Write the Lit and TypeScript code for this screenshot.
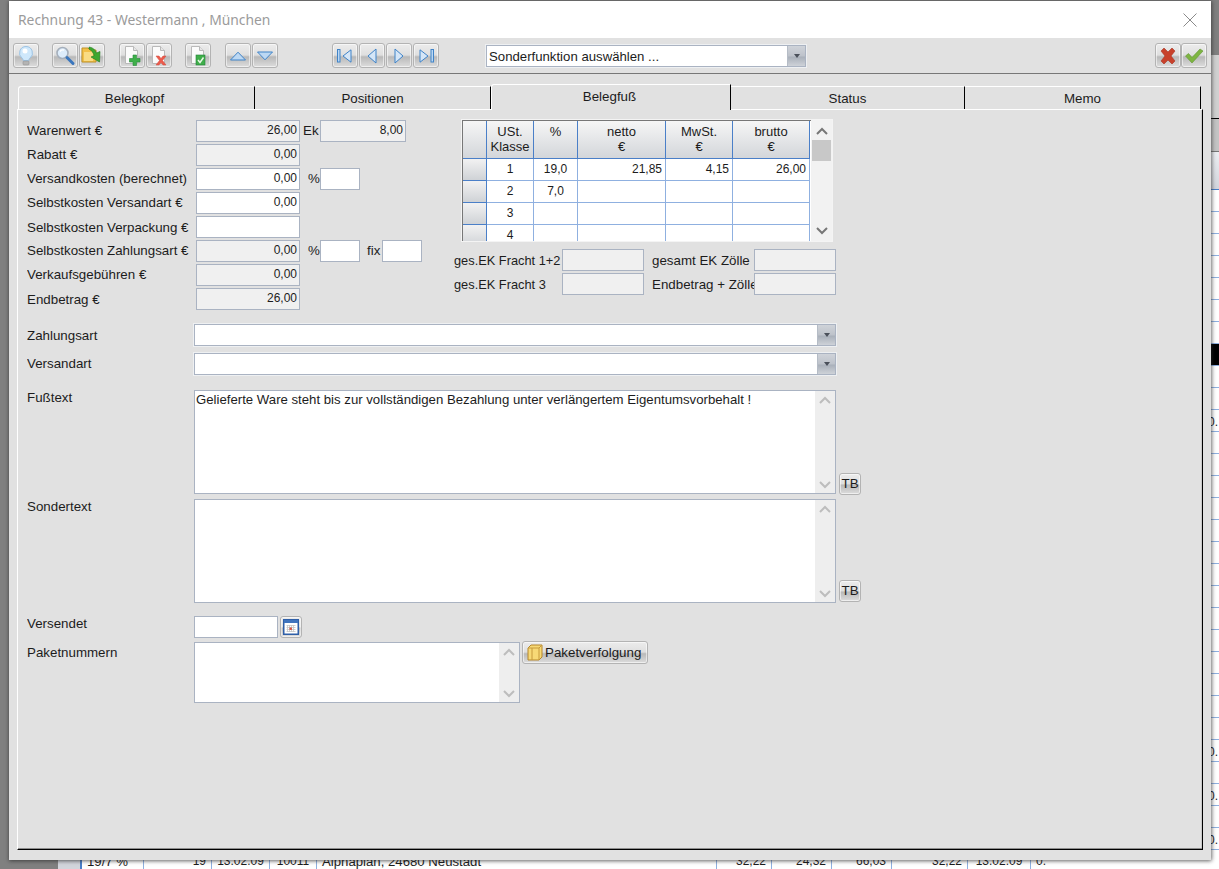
import { LitElement, html, svg, css } from "lit";
import { customElement } from "lit/decorators.js";

const chevUp = html`<svg class="chev" width="14" height="9" viewBox="0 0 14 9"><polyline points="2,7 7,2 12,7" fill="none" stroke="currentColor" stroke-width="2"/></svg>`;
const chevDown = html`<svg class="chev" width="14" height="9" viewBox="0 0 14 9"><polyline points="2,2 7,7 12,2" fill="none" stroke="currentColor" stroke-width="2"/></svg>`;
const doc = svg`<path d="M3.5 1.5h8l4 4v13h-12z" fill="#fbfbfb" stroke="#b9b9b9"/><path d="M11.5 1.5v4h4" fill="#e6e6e6" stroke="#b9b9b9"/>`;

const icons: Record<string, unknown> = {
  bulb: html`<svg width="20" height="22" viewBox="0 0 20 22"><path d="M10 1.5a6.5 6.5 0 0 1 4 11.6c-.9.8-1.2 1.6-1.2 2.4H7.2c0-.8-.3-1.6-1.2-2.4A6.5 6.5 0 0 1 10 1.5z" fill="#cfe8fb" stroke="#9cc3e4"/><circle cx="9" cy="6" r="2.5" fill="#fff"/><rect x="7" y="16" width="6" height="4" rx="1" fill="#b4b4b4" stroke="#949494" stroke-width=".6"/></svg>`,
  search: html`<svg width="22" height="22" viewBox="0 0 22 22"><circle cx="8.5" cy="8" r="5.5" fill="#dcecfb" stroke="#a5afbb" stroke-width="1.6"/><path d="M6 6.5a3.5 3.5 0 0 1 4-1.4" fill="none" stroke="#fff" stroke-width="1.4"/><path d="M13 12.5l6 6" stroke="#3a76bd" stroke-width="3" stroke-linecap="round"/></svg>`,
  folder: html`<svg width="22" height="22" viewBox="0 0 22 22"><path d="M1 3h6l2 2h6v12H1z" fill="#f2c04a" stroke="#c09428"/><path d="M3 7h9v9H3z" fill="#f9dc85"/><path d="M8 2c4 .5 6 2.500 7.500 6L19 6.500 18.500 17 10 12l3.200-1.500C12 7.500 10.500 5 8 4z" fill="#3da72f" stroke="#1f7a1c" stroke-width=".6"/></svg>`,
  add: html`<svg width="20" height="21" viewBox="0 0 20 21">${doc}<path d="M11 10h3.500v3.500H18v3.500h-3.500v3.500H11V17H7.500v-3.500H11z" fill="#3fb04a" stroke="#27893a" stroke-width=".6"/></svg>`,
  del: html`<svg width="20" height="21" viewBox="0 0 20 21">${doc}<path d="M7 11h3l2 2.500 2-2.500h3l-3.500 4.500 3.500 4.500h-3l-2-2.500-2 2.500H7l3.500-4.500z" fill="#ec5b4c" stroke="#d04a3c" stroke-width=".5"/></svg>`,
  renew: html`<svg width="20" height="21" viewBox="0 0 20 21">${doc}<rect x="8" y="10" width="9" height="10" fill="#3fae4a" stroke="#23813a" stroke-width=".6"/><path d="M10 15l2 2.500 3.500-5" fill="none" stroke="#e9f7e6" stroke-width="1.5"/></svg>`,
  up: html`<svg width="18" height="10" viewBox="0 0 18 10"><path d="M9 1.200L16.500 9h-15z" fill="#bcd8f3" stroke="#3f83c8"/></svg>`,
  down: html`<svg width="18" height="10" viewBox="0 0 18 10"><path d="M9 8.800L16.500 1h-15z" fill="#bcd8f3" stroke="#3f83c8"/></svg>`,
  first: html`<svg width="18" height="14" viewBox="0 0 18 14"><rect x="1.500" y=".5" width="2.500" height="12.500" fill="#bcd8f3" stroke="#3f83c8"/><path d="M7 7l8-6.200v12.400z" fill="#d5e6f7" stroke="#3f83c8"/></svg>`,
  prev: html`<svg width="12" height="16" viewBox="0 0 12 16"><path d="M2 8l8-7v14z" fill="#d5e6f7" stroke="#3f83c8"/></svg>`,
  next: html`<svg width="12" height="16" viewBox="0 0 12 16"><path d="M10 8L2 1v14z" fill="#d5e6f7" stroke="#3f83c8"/></svg>`,
  last: html`<svg width="18" height="14" viewBox="0 0 18 14"><rect x="14" y=".5" width="2.500" height="12.500" fill="#bcd8f3" stroke="#3f83c8"/><path d="M11 7L3 .8v12.400z" fill="#d5e6f7" stroke="#3f83c8"/></svg>`,
  cancel: html`<svg width="18" height="18" viewBox="0 0 18 18"><path d="M2 4l3-3 4 4 4-4 3 3-4 5 4 5-3 3-4-4-4 4-3-3 4-5z" fill="#c8412b" stroke="#a83320" stroke-width=".6"/></svg>`,
  ok: html`<svg width="20" height="18" viewBox="0 0 20 18"><path d="M1.500 9l3-2.500 3.500 4L16 2l3 2-11 12z" fill="#7eb542" stroke="#5f9430" stroke-width=".6"/></svg>`,
  cal: html`<svg width="16" height="16" viewBox="0 0 16 16"><rect x=".75" y=".75" width="14.500" height="14.500" fill="#fff" stroke="#2f5fa8" stroke-width="1.500"/><rect x="1" y="1" width="14" height="3" fill="#3f73bd"/><path d="M3.500 6.500h9M3.500 8.500h9M3.500 10.500h9M3.500 12.500h9M4.500 6v7M6.500 6v7M8.500 6v7M10.500 6v7" stroke="#c4c4c4" stroke-width=".8"/><rect x="6.500" y="8.500" width="2.400" height="2.400" fill="#d8503c"/></svg>`,
  box: html`<svg width="16" height="17" viewBox="0 0 16 17"><path d="M1 4l3-3h11v12l-3 3H1z" fill="#f7d976" stroke="#b5862a"/><path d="M1 4h11v12M12 4l3-3M5 4v12" fill="none" stroke="#c69a3c"/></svg>`,
};

const rowLines = Array.from({ length: 30 }, (_, i) => i);
const noteRows = new Set([10, 25, 27, 29]);

const backCells: [string, string, string][] = [
  ["w62 name", "left", "19/7 %"],
  ["w68", "right", "19"],
  ["w58", "center", "13.02.09"],
  ["w47", "center", "10011"],
  ["w400 name", "left", "Alphaplan, 24680 Neustadt"],
  ["w55", "right", "32,22"],
  ["w60", "right", "24,32"],
  ["w60", "right", "66,03"],
  ["w76", "right", "32,22"],
  ["w63", "center", "13.02.09"],
  ["rest", "left", "0."],
];

const taxRows = [
  ["1", "19,0", "21,85", "4,15", "26,00"],
  ["2", "7,0", "", "", ""],
  ["3", "", "", "", ""],
  ["4", "", "", "", ""],
];

@customElement("app-root")
export class AppRoot extends LitElement {
  static styles = css`
    :host {
      display: block;
      position: relative;
      width: 1219px;
      height: 869px;
      overflow: hidden;
      font: 13.33px/14px "Liberation Sans", Arial, sans-serif;
      color: #1c1c1c;
      background: #808080;
    }
    * { box-sizing: border-box; }

    /* the application behind the dialog */
    .strip { position: absolute; left: 1211px; top: 55px; width: 8px; display: flex; flex-direction: column; background: #fff; }
    .strip-a { height: 64px; background: #d0d0d0; border-bottom: 1px solid #000; }
    .strip-b { height: 33px; background: #c4c4c4; border-bottom: 1px solid #777; }
    .strip-c { height: 38px; background: linear-gradient(#eceef2, #d2d5dc); border-bottom: 1px solid #4a7fc8; }
    .strip-row { height: 22px; border-bottom: 1px solid #8fb0e0; font: 12px/24px "Liberation Sans", sans-serif; white-space: nowrap; overflow: hidden; }
    .strip-row.sel { background: #000; }
    .note { margin-left: -3px; display: block; }
    .backrow { position: absolute; left: 58px; top: 850px; width: 1161px; height: 19px; display: flex; background: #fff; font-size: 12px; line-height: 23px; white-space: nowrap; }
    .backhead { width: 24px; background: #d2d5dc; border-right: 2px solid #4a7fc8; }
    .bc { border-right: 1px solid #8fb0e0; padding: 0 5px; overflow: hidden; }
    .bc.rest { border-right: 0; flex: 1; }
    .bc.name { font-size: 13.2px; }
    .left { text-align: left; } .right { text-align: right; } .center { text-align: center; }
    .w62 { width: 62px; } .w68 { width: 68px; } .w58 { width: 58px; } .w47 { width: 47px; }
    .w400 { width: 400px; } .w55 { width: 55px; } .w60 { width: 60px; } .w76 { width: 76px; } .w63 { width: 63px; }

    /* dialog */
    .window {
      position: absolute; left: 9px; top: 1px; width: 1202px; height: 859px;
      background: #e1e1e1; display: flex; flex-direction: column;
      box-shadow: 0 1px 4px rgba(40,40,40,.55), 1px 0 4px rgba(40,40,40,.4);
    }
    .title { height: 37px; background: #fff; display: flex; align-items: center; justify-content: space-between; padding: 0 14px 0 9px; }
    .title-text { font: 13.85px/20px "Noto Sans", "Open Sans", sans-serif; color: #9b9b9b; }
    .toolbar { height: 36px; display: flex; align-items: center; padding: 0 4px; border-bottom: 1px solid #777; }
    .grp { display: flex; gap: 1px; }
    .g13 { margin-left: 13px; } .g14 { margin-left: 14px; } .g54 { margin-left: 54px; } .g47 { margin-left: 47px; }
    .end { margin-left: auto; gap: 0; }
    .btn {
      display: flex; align-items: center; justify-content: center; flex: none;
      border: 1px solid #b3b3b3; border-radius: 3px;
      background: linear-gradient(#ececec 0, #dfdfdf 48%, #b9b9b9 56%, #dddddd 100%);
      box-shadow: inset 0 0 0 1px rgba(255,255,255,.55);
      font: inherit; color: inherit; padding: 0;
    }
    .tool { width: 26px; height: 25px; }
    .combo { display: flex; height: 22px; border: 1px solid #aab3c2; background: #fff; box-shadow: 0 0 0 1px #eef0f2; align-items: stretch; }
    .combo-text { flex: 1; padding-left: 2px; font-size: 13.2px; line-height: 22px; white-space: nowrap; }
    .combo-btn { width: 18px; display: flex; align-items: center; justify-content: center; border-left: 1px solid #b5bcc6; background: linear-gradient(#cfd3d9 0, #bdc2ca 50%, #a9b0ba 55%, #ced2d8 100%); }
    .combo-btn::after { content: ""; border: 3px solid transparent; border-top: 4px solid #4a505a; border-bottom: 0; }
    .wide-sel { width: 320px; }

    .tabs { display: flex; height: 25px; margin: 10px 0 0 9px; align-items: flex-end; position: relative; z-index: 1; }
    .tab { height: 23px; text-align: center; line-height: 24px; border-top: 1px solid #fff; border-right: 1px solid #000; background: #e1e1e1; }
    .tab:first-child { border-left: 1px solid #fff; border-top-left-radius: 3px; padding-right: 4px; }
    .tab.active { height: 26px; margin-bottom: -1px; line-height: 24px; border-left: 1px solid #fff; border-top-left-radius: 3px; padding: 0 3px 4px 0; }
    .t1 { width: 237px; } .t2 { width: 236px; } .t3 { width: 240px; } .t4 { width: 234px; } .t5 { width: 236px; }

    .panel {
      margin: 0 8px 0 8px; height: 741px; padding: 10px 0 0 9px;
      border-top: 1px solid #fff; border-left: 1px solid #fff; border-right: 1px solid #000; border-bottom: 1px solid #000;
      box-shadow: inset 0 -1px 0 #8d8d8d, inset -1px 0 0 #c9c9c9;
    }
    .top { display: flex; }
    .col-l { width: 427px; display: flex; flex-direction: column; gap: 2px; }
    .col-r { display: flex; flex-direction: column; gap: 2px; margin-top: -1px; }
    .row { display: flex; align-items: center; height: 22px; }
    .lbl { white-space: nowrap; overflow: hidden; flex: none; }
    .pt { padding-top: 1px; }
    .l169 { width: 169px; } .l167 { width: 167px; } .l108 { width: 108px; font-size: 12.8px; } .l102 { width: 102px; margin-left: 8px; }
    .f {
      height: 22px; flex: none; border: 1px solid #aab3c2; background: #fff;
      text-align: right; padding: 0 2px; font-size: 12px; line-height: 19px;
    }
    .ro { background: #f0f0f0; }
    .f104 { width: 104px; } .f86 { width: 86px; } .f40 { width: 40px; } .f82 { width: 82px; } .f84 { width: 84px; }
    .suffix { flex: none; white-space: nowrap; }
    .s20e { width: 20px; padding-left: 3px; } .s20 { width: 20px; padding-left: 8px; } .s22 { width: 22px; padding-left: 7px; }

    .grid { width: 372px; height: 123px; margin: 0 0 5px 7px; border: 1px solid #f4f4f4; background: #fff; display: flex; overflow: hidden; }
    .grid-body { width: 349px; border-top: 1px solid #777; border-left: 1px solid #777; overflow: hidden; }
    .gr { display: grid; grid-template-columns: 24px 47px 44px 88px 67px 77px; height: 22px; }
    .gr > div { border-right: 1px solid #8fb0e0; border-bottom: 1px solid #8fb0e0; padding: 0 3px; font-size: 12px; line-height: 21px; text-align: right; white-space: nowrap; }
    .gr > .c { text-align: center; padding: 0; }
    .gr > .rh { background: linear-gradient(#f2f2f2, #cfd2d6); border-color: #4a7fc8; }
    .gr.gh { height: 38px; }
    .gr.gh > div { background: linear-gradient(#f6f6f6, #d3d6da); border-right-color: #4a7fc8; border-bottom-color: #4a7fc8; text-align: center; padding: 3px 0 0; font-size: 13px; line-height: 15px; }
    .gscroll { flex: 1; background: #f2f2f2; display: flex; flex-direction: column; align-items: center; color: #777; padding-top: 7px; position: relative; }
    .thumb { width: 19px; height: 21px; background: #c8c8c8; margin-top: 4px; }
    .gscroll .chev:last-child { margin-top: auto; margin-bottom: 6px; }

    .wide { display: flex; height: 22px; align-items: center; }
    .c642 { width: 642px; }
    .m14 { margin-top: 14px; } .m7 { margin-top: 7px; } .m15 { margin-top: 15px; } .m5 { margin-top: 5px; } .m13 { margin-top: 13px; } .m4 { margin-top: 4px; }
    .block { display: flex; align-items: flex-start; }
    .memo { border: 1px solid #aab3c2; background: #fff; display: flex; flex: none; }
    .m642 { width: 642px; height: 104px; }
    .m326 { width: 326px; height: 61px; }
    .memo-text { flex: 1; padding: 2px 1px; font-size: 13.2px; white-space: nowrap; }
    .memo-bar { width: 20px; background: #eeeeee; color: #bdbdbd; display: flex; flex-direction: column; align-items: center; justify-content: space-between; padding: 5px 0 4px; }
    .tb { width: 22px; height: 22px; margin-left: 3px; align-self: flex-end; }
    .tb-a { margin-bottom: -1px; } .tb-b { margin-bottom: 1px; }
    .calbtn { width: 22px; height: 22px; margin-left: 2px; }
    .pkt { height: 23px; width: 126px; margin: -1px 0 0 2px; gap: 2px; justify-content: flex-start; padding-left: 4px; }
    .p4 { padding-top: 4px; }
    .close { display: block; }
  `;

  private tool(name: string) {
    return html`<div class="btn tool">${icons[name]}</div>`;
  }

  render() {
    return html`
      <div class="strip">
        <div class="strip-a"></div>
        <div class="strip-b"></div>
        <div class="strip-c"></div>
        ${rowLines.map(
          (i) => html`<div class="strip-row ${i === 7 ? "sel" : ""}">${noteRows.has(i) ? html`<span class="note">0.</span>` : ""}</div>`
        )}
      </div>
      <div class="backrow">
        <div class="backhead"></div>
        ${backCells.map(([w, a, t]) => html`<div class="bc ${w} ${a}">${t}</div>`)}
      </div>

      <div class="window">
        <div class="title">
          <span class="title-text">Rechnung 43 - Westermann , München</span>
          <svg class="close" width="14" height="14" viewBox="0 0 14 14"><path d="M.5.5l13 13M13.5.5l-13 13" stroke="#8a8a8a" fill="none"/></svg>
        </div>
        <div class="toolbar">
          <div class="grp">${this.tool("bulb")}</div>
          <div class="grp g13">${this.tool("search")}${this.tool("folder")}</div>
          <div class="grp g14">${this.tool("add")}${this.tool("del")}</div>
          <div class="grp g13">${this.tool("renew")}</div>
          <div class="grp g14">${this.tool("up")}${this.tool("down")}</div>
          <div class="grp g54">${this.tool("first")}${this.tool("prev")}${this.tool("next")}${this.tool("last")}</div>
          <div class="combo wide-sel g47"><div class="combo-text">Sonderfunktion auswählen ...</div><div class="combo-btn"></div></div>
          <div class="grp end">${this.tool("cancel")}${this.tool("ok")}</div>
        </div>
        <div class="tabs">
          <div class="tab t1">Belegkopf</div>
          <div class="tab t2">Positionen</div>
          <div class="tab active t3">Belegfuß</div>
          <div class="tab t4">Status</div>
          <div class="tab t5">Memo</div>
        </div>
        <div class="panel">
          <div class="top">
            <div class="col-l">
              <div class="row"><span class="lbl l169">Warenwert €</span><div class="f f104 ro">26,00</div><span class="suffix s20e">Ek</span><div class="f f86 ro">8,00</div></div>
              <div class="row"><span class="lbl l169">Rabatt €</span><div class="f f104 ro">0,00</div></div>
              <div class="row"><span class="lbl l169">Versandkosten (berechnet)</span><div class="f f104">0,00</div><span class="suffix s20">%</span><div class="f f40"></div></div>
              <div class="row"><span class="lbl l169">Selbstkosten Versandart €</span><div class="f f104">0,00</div></div>
              <div class="row"><span class="lbl l169 pt">Selbstkosten Verpackung €</span><div class="f f104"></div></div>
              <div class="row"><span class="lbl l169">Selbstkosten Zahlungsart €</span><div class="f f104 ro">0,00</div><span class="suffix s20">%</span><div class="f f40"></div><span class="suffix s22">fix</span><div class="f f40"></div></div>
              <div class="row"><span class="lbl l169">Verkaufsgebühren €</span><div class="f f104 ro">0,00</div></div>
              <div class="row"><span class="lbl l169 pt">Endbetrag €</span><div class="f f104 ro">26,00</div></div>
            </div>
            <div class="col-r">
              <div class="grid">
                <div class="grid-body">
                  <div class="gr gh">
                    <div></div><div>USt.<br />Klasse</div><div>%</div><div>netto<br />€</div><div>MwSt.<br />€</div><div>brutto<br />€</div>
                  </div>
                  ${taxRows.map(
                    (r) => html`<div class="gr">
                      <div class="rh"></div>
                      <div class="c">${r[0]}</div>
                      <div class="c">${r[1]}</div>
                      <div>${r[2]}</div>
                      <div>${r[3]}</div>
                      <div>${r[4]}</div>
                    </div>`
                  )}
                </div>
                <div class="gscroll">${chevUp}<div class="thumb"></div>${chevDown}</div>
              </div>
              <div class="row"><span class="lbl l108 pt">ges.EK Fracht 1+2</span><div class="f f82 ro"></div><span class="lbl l102 pt">gesamt EK Zölle</span><div class="f f82 ro"></div></div>
              <div class="row"><span class="lbl l108 pt">ges.EK Fracht 3</span><div class="f f82 ro"></div><span class="lbl l102 pt">Endbetrag + Zölle</span><div class="f f82 ro"></div></div>
            </div>
          </div>

          <div class="wide m14"><span class="lbl l167 pt">Zahlungsart</span><div class="combo c642"><div class="combo-text"></div><div class="combo-btn"></div></div></div>
          <div class="wide m7"><span class="lbl l167">Versandart</span><div class="combo c642"><div class="combo-text"></div><div class="combo-btn"></div></div></div>

          <div class="block m15">
            <span class="lbl l167 pt">Fußtext</span>
            <div class="memo m642"><div class="memo-text">Gelieferte Ware steht bis zur vollständigen Bezahlung unter verlängertem Eigentumsvorbehalt !</div><div class="memo-bar">${chevUp}${chevDown}</div></div>
            <div class="btn tb tb-a">TB</div>
          </div>
          <div class="block m5">
            <span class="lbl l167 pt">Sondertext</span>
            <div class="memo m642"><div class="memo-text"></div><div class="memo-bar">${chevUp}${chevDown}</div></div>
            <div class="btn tb tb-b">TB</div>
          </div>
          <div class="block m13">
            <span class="lbl l167 pt">Versendet</span>
            <div class="f f84"></div>
            <div class="btn calbtn">${icons.cal}</div>
          </div>
          <div class="block m4">
            <span class="lbl l167 p4">Paketnummern</span>
            <div class="memo m326"><div class="memo-text"></div><div class="memo-bar">${chevUp}${chevDown}</div></div>
            <div class="btn pkt">${icons.box}<span>Paketverfolgung</span></div>
          </div>
        </div>
      </div>
    `;
  }
}
